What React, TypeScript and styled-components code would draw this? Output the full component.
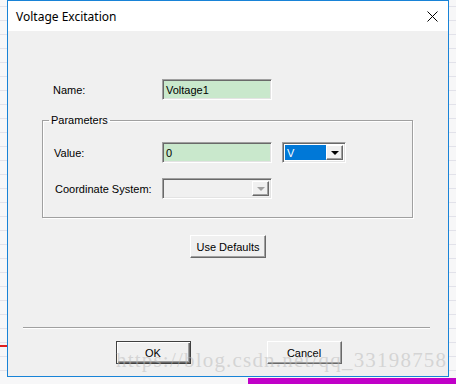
import React from "react";
import styled, { createGlobalStyle } from "styled-components";

const GlobalStyle = createGlobalStyle`
  * { box-sizing: border-box; }
  html, body { margin: 0; padding: 0; }
  body {
    font-family: "Liberation Sans", Arial, sans-serif;
    font-size: 11px;
    color: #000;
  }
`;

const Page = styled.div`
  position: relative;
  width: 456px;
  height: 384px;
  overflow: hidden;
  padding: 0 7px 7px 7px;
  background-color: #f7f7f8;
  background-image:
    linear-gradient(#c000c8, #c000c8),
    linear-gradient(#e02020, #e02020),
    repeating-linear-gradient(0deg, transparent 0 13px, #e2e2ea 13px 14px);
  background-size: 208px 6px, 7px 2px, 100% 100%;
  background-position: 248px 378px, 0 345px, 0 0;
  background-repeat: no-repeat;
`;

const Dialog = styled.div`
  width: 442px;
  height: 377px;
  border: 1px solid #1883d7;
  display: flex;
  flex-direction: column;
  background: #f0f0f0;
`;

const TitleBar = styled.div`
  height: 30px;
  flex: none;
  background: #fff;
  display: flex;
  align-items: center;
  justify-content: space-between;
  padding: 0 10px 0 8px;
`;

const Title = styled.span`
  font-family: "Noto Sans", "Open Sans", sans-serif;
  font-size: 12px;
  color: #000;
`;

const Content = styled.div`
  position: relative;
  flex: 1;
  display: flex;
  flex-direction: column;
  padding-top: 48px;
`;

const Row = styled.div<{ $indent: number; $labelWidth: number }>`
  display: flex;
  align-items: center;
  height: 21px;
  padding-left: ${(p) => p.$indent}px;
  & > label {
    width: ${(p) => p.$labelWidth}px;
    flex: none;
  }
`;

const Group = styled.fieldset`
  margin: 14px 0 0 34px;
  width: 371px;
  padding: 15px 0 18px 0;
  border: 1px solid #a0a0a0;
  box-shadow: inset 1px 1px 0 #fff, 1px 1px 0 #fff;
  display: flex;
  flex-direction: column;
  gap: 15px;
`;

const Legend = styled.legend`
  margin-left: 6px;
  padding: 0 2px;
  line-height: 13px;
`;

const Sunken = styled.div<{ $width: number; $bg?: string }>`
  width: ${(p) => p.$width}px;
  height: 21px;
  background: ${(p) => p.$bg || "#fff"};
  border-style: solid;
  border-width: 1px;
  border-color: #a0a0a0 #fff #fff #a0a0a0;
  box-shadow: inset 1px 1px 0 #696969, inset -1px -1px 0 #e3e3e3;
  display: flex;
  align-items: center;
  padding: 0 2px;
`;

const TextField = styled(Sunken)`
  padding-left: 3px;
`;

const Combo = styled(Sunken)`
  padding: 2px;
  gap: 0;
`;

const Selected = styled.div`
  flex: 1;
  height: 100%;
  background: #0078d7;
  color: #fff;
  padding-left: 2px;
  display: flex;
  align-items: center;
`;

const ComboSpacer = styled.div`
  flex: 1;
`;

const ArrowButton = styled.div<{ $disabled?: boolean }>`
  width: 17px;
  height: 100%;
  background: #f0f0f0;
  border-style: solid;
  border-width: 1px;
  border-color: #fff #696969 #696969 #fff;
  box-shadow: inset -1px -1px 0 #a0a0a0;
  display: flex;
  align-items: center;
  justify-content: center;
  &::after {
    content: "";
    border-left: 4px solid transparent;
    border-right: 4px solid transparent;
    border-top: 4px solid ${(p) => (p.$disabled ? "#a0a0a0" : "#000")};
  }
`;

const Button = styled.button<{ $default?: boolean; $width: number }>`
  width: ${(p) => p.$width}px;
  height: 23px;
  padding: 0;
  font-family: "Liberation Sans", Arial, sans-serif;
  font-size: 11px;
  color: #000;
  background: #f0f0f0;
  border-style: solid;
  border-width: 1px;
  border-color: ${(p) =>
    p.$default ? "#404040" : "#fff #696969 #696969 #fff"};
  box-shadow: ${(p) =>
    p.$default
      ? "inset 1px 1px 0 #fff, inset -1px -1px 0 #696969, inset -2px -2px 0 #a0a0a0"
      : "inset -1px -1px 0 #a0a0a0"};
`;

const CenterRow = styled.div`
  display: flex;
  justify-content: center;
  margin-top: 17px;
`;

const Separator = styled.div`
  margin: auto 18px 0 15px;
  height: 2px;
  border-top: 1px solid #a0a0a0;
  border-bottom: 1px solid #fff;
`;

const Footer = styled.div`
  display: flex;
  justify-content: center;
  gap: 76px;
  padding: 12px 0 12px 1px;
`;

const Watermark = styled.div`
  position: absolute;
  left: 108px;
  bottom: 3px;
  font-family: "Liberation Serif", "Times New Roman", serif;
  font-size: 21px;
  letter-spacing: 1.2px;
  color: rgba(185, 185, 185, 0.5);
  white-space: nowrap;
  pointer-events: none;
`;

const CloseIcon = () => (
  <svg width="11" height="11" viewBox="0 0 11 11">
    <path d="M0.5 0.5 L10.5 10.5 M10.5 0.5 L0.5 10.5" stroke="#000" strokeWidth="1" />
  </svg>
);

export default function App() {
  return (
    <>
      <GlobalStyle />
      <Page>
        <Dialog>
          <TitleBar>
            <Title>Voltage Excitation</Title>
            <CloseIcon />
          </TitleBar>
          <Content>
            <Row $indent={45} $labelWidth={109}>
              <label>Name:</label>
              <TextField $width={110} $bg="#c9e8cc">Voltage1</TextField>
            </Row>
            <Group>
              <Legend>Parameters</Legend>
              <Row $indent={11} $labelWidth={108}>
                <label>Value:</label>
                <TextField $width={110} $bg="#c9e8cc">0</TextField>
                <Combo $width={64} style={{ marginLeft: 10 }}>
                  <Selected>V</Selected>
                  <ArrowButton />
                </Combo>
              </Row>
              <Row $indent={12} $labelWidth={107}>
                <label>Coordinate System:</label>
                <Combo $width={110} $bg="#f0f0f0">
                  <ComboSpacer />
                  <ArrowButton $disabled />
                </Combo>
              </Row>
            </Group>
            <CenterRow>
              <Button $width={76}>Use Defaults</Button>
            </CenterRow>
            <Separator />
            <Footer>
              <Button $default $width={75}>OK</Button>
              <Button $width={75}>Cancel</Button>
            </Footer>
            <Watermark>https://blog.csdn.net/qq_33198758</Watermark>
          </Content>
        </Dialog>
      </Page>
    </>
  );
}
